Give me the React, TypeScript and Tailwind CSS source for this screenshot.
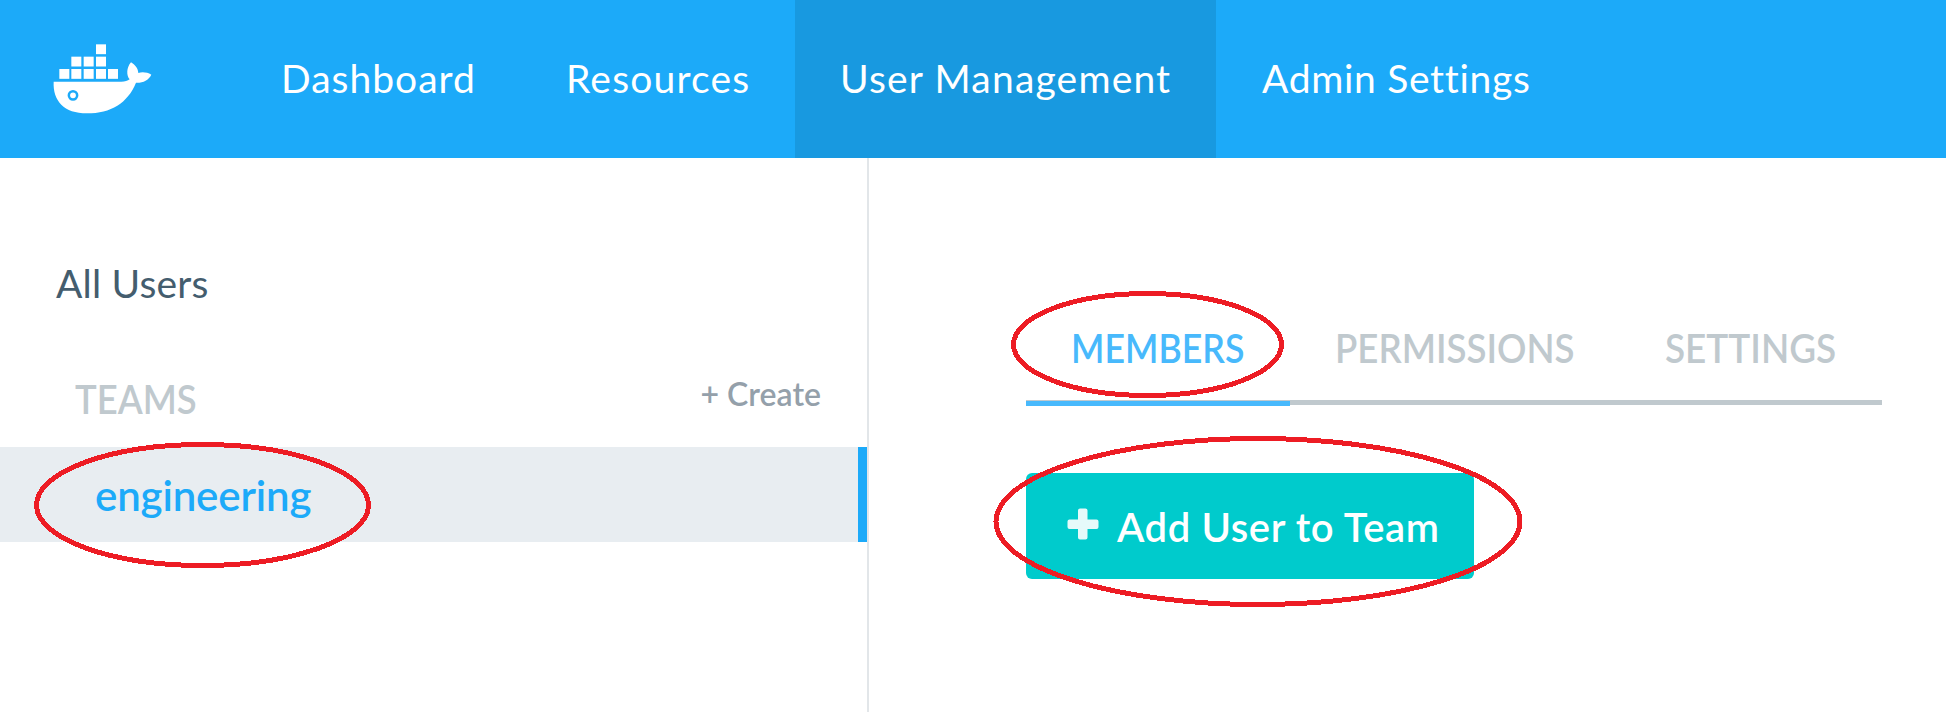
const boxes: [number, number][] = [
  [168, 43],
  [94, 80], [131, 80], [168, 80],
  [58, 117], [94, 117], [131, 117], [168, 117], [204, 117],
];

function DockerLogo() {
  return (
    <svg viewBox="0 0 390 300" className="h-[100px] w-[130px]" fill="#fff" aria-label="Docker">
      {boxes.map(([x, y]) => (
        <rect key={`${x}-${y}`} x={x} y={y} width="30" height="29.5" />
      ))}
      <path d="M41 155 H244 C255 155 263 153 269 148 C259 137 259 113 273 97 C285 104 294 115 295 129 C307 125 322 127 334 134 C325 151 309 159 288 158 C263 219 213 250 141 250 C72 250 38 212 41 155 Z" />
      <circle cx="99" cy="196" r="12.5" fill="#fff" stroke="#1caaf9" strokeWidth="7.5" />
    </svg>
  );
}

function PlusIcon() {
  return (
    <svg viewBox="0 0 32 32" className="mb-[4px] h-8 w-8 shrink-0" fill="#fff" fillOpacity="0.9">
      <path d="M13 0.5 h5.500 q2 0 2 2 V11.5 H29.5 q2 0 2 2 v5.500 q0 2 -2 2 H20.500 V29.500 q0 2 -2 2 h-5.500 q-2 0 -2 -2 V21 H2.500 q-2 0 -2 -2 V13.500 q0 -2 2 -2 H11 V2.500 q0 -2 2 -2 Z" />
    </svg>
  );
}

function Highlights() {
  return (
    <svg
      className="pointer-events-none absolute inset-0 h-[712px] w-[1946px]"
      fill="none"
      stroke="#ed1c24"
      strokeWidth="5"
      shapeRendering="crispEdges"
    >
      <ellipse cx="202.500" cy="505" rx="166" ry="60.500" />
      <ellipse cx="1147.500" cy="344.500" rx="134" ry="51" />
      <ellipse cx="1258" cy="521.500" rx="262" ry="83" />
    </svg>
  );
}

export default function App() {
  return (
    <div className="relative flex h-[712px] w-[1946px] flex-col overflow-hidden bg-white font-[Lato,sans-serif] whitespace-nowrap">
      <header className="flex h-[158px] shrink-0 bg-[#1caaf9] text-[39px] leading-[157px] text-white">
        <div className="w-[236px] pt-[30px] pl-10">
          <DockerLogo />
        </div>
        <nav className="flex">
          <a className="w-[284px] pl-[45px] tracking-[1px]">Dashboard</a>
          <a className="w-[275px] pl-[46px] tracking-[1.2px]">Resources</a>
          <a className="w-[421px] bg-[#1899e0] pl-[45px] tracking-[1.19px]">User Management</a>
          <a className="pl-[46px] tracking-[0.7px]">Admin Settings</a>
        </nav>
      </header>

      <div className="flex grow">
        <aside className="w-[869px] border-r-2 border-[#e2e6e9] pt-[101px]">
          <div className="pl-[56px] text-[39px] leading-[48px] tracking-[0.2px] text-[#445d6e]">All Users</div>
          <div className="mt-[66px] flex h-[74px] items-start justify-between pr-[46px] pl-[75px]">
            <h2 className="origin-left scale-x-[0.91] pt-[2px] text-[40px] leading-[48px] font-semibold text-[#c0c9ce]">TEAMS</h2>
            <a className="pt-px text-[32px] leading-[40px] font-semibold text-[#94a0aa]">+ Create</a>
          </div>
          <div className="flex h-[95px] items-center border-r-[9px] border-[#1caaf9] bg-[#e8edf1] pl-[95px] text-[42px] leading-none font-semibold tracking-[-0.15px] text-[#1caaf9]">
            engineering
          </div>
        </aside>

        <main className="pt-[166px] pl-[157px]">
          <div className="flex h-[81px] w-[856px] border-b-[5px] border-[#c0c9ce] text-[40px] leading-[48px] font-semibold text-[#c0c9ce]">
            <div className="h-[82px] w-[264px] border-b-[5px] border-[#48b9fc] pl-[45px] text-[#48b9fc]">
              <span className="inline-block origin-left scale-x-[0.892]">MEMBERS</span>
            </div>
            <div className="w-[330px] pl-[45px]">
              <span className="inline-block origin-left scale-x-[0.915]">PERMISSIONS</span>
            </div>
            <div className="pl-[45px]">
              <span className="inline-block origin-left scale-x-[0.922]">SETTINGS</span>
            </div>
          </div>
          <button className="mt-[68px] flex h-[106px] w-[448px] items-center gap-[18px] rounded-md bg-[#00cbcc] pl-[41px] text-[40px] font-semibold tracking-[0.6px] text-white">
            <PlusIcon />
            <span className="pt-[2px]">Add User to Team</span>
          </button>
        </main>
      </div>

      <Highlights />
    </div>
  );
}
